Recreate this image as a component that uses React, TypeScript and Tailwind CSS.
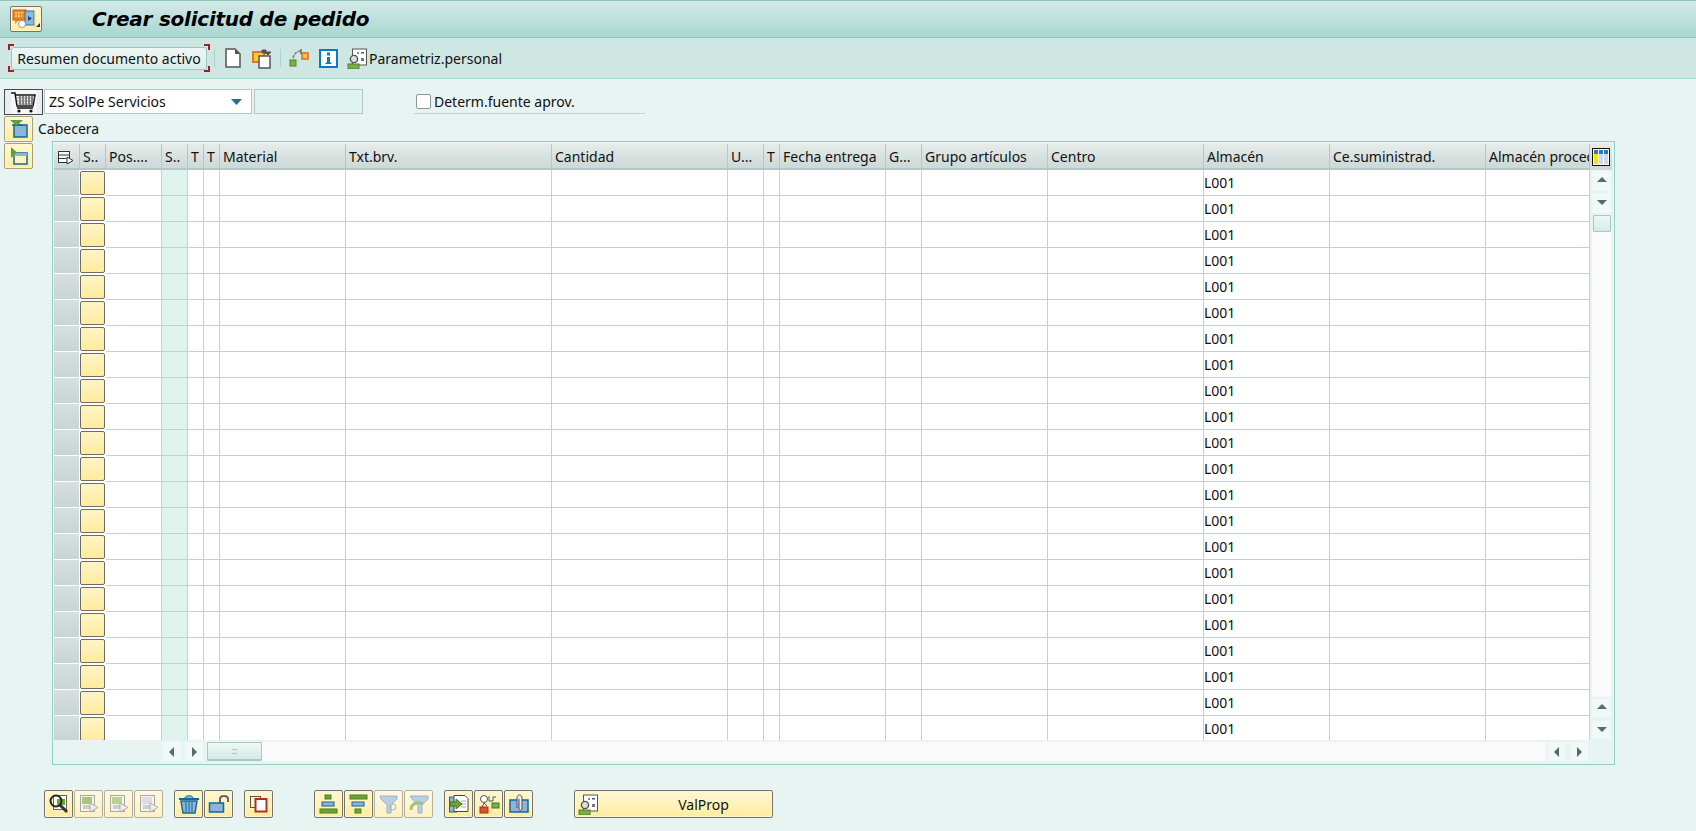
import React from 'react';

const columns = ['', 'S..', 'Pos....', 'S..', 'T', 'T', 'Material', 'Txt.brv.', 'Cantidad', 'U...', 'T', 'Fecha entrega', 'G...', 'Grupo artículos', 'Centro', 'Almacén', 'Ce.suministrad.', 'Almacén proced'];
const rows = Array.from({ length: 22 }, (_, i) => i);
const gridCols = 'grid grid-cols-[26px_26px_56px_26px_16px_16px_126px_206px_176px_36px_16px_106px_36px_126px_156px_126px_156px_104px]';

const ArrowBtn: React.FC<{ dir: 'up' | 'down' | 'left' | 'right'; className?: string }> = ({ dir, className }) => {
  const pts = { up: '4,10 9,5 14,10', down: '4,6 14,6 9,11', left: '11,4 11,14 6,9', right: '7,4 7,14 12,9' }[dir];
  return (
    <div className={`flex items-center justify-center bg-[#f1f9f8] ${className ?? ''}`}>
      <svg width="18" height="18" viewBox="0 0 18 18"><polygon points={pts} fill="#4f6f6b" /></svg>
    </div>
  );
};

const YellowBtn: React.FC<{ children?: React.ReactNode; disabled?: boolean; className?: string }> = ({ children, disabled, className }) => (
  <div className={`flex items-center justify-center rounded-[2px] border ${disabled ? 'border-[#b5b09c] bg-gradient-to-b from-[#fff9e4] to-[#fff1c2]' : 'border-[#77736a] bg-gradient-to-b from-[#fff7d4] to-[#ffec9e] shadow-[inset_0_0_0_1px_#fff6cf]'} ${className ?? 'h-[28px] w-[29px]'}`}>
    {children}
  </div>
);

const Ico: React.FC<{ children: React.ReactNode; w?: number; h?: number; className?: string }> = ({ children, w = 20, h = 20, className }) => (
  <svg width={w} height={h} viewBox={`0 0 ${w} ${h}`} className={className}>{children}</svg>
);

const PersonalIcon = () => (
  <Ico w={20} h={21}>
    <rect x="5.500" y="1" width="14" height="16" fill="#fff" stroke="#555" />
    <rect x="14" y="4" width="3" height="1.500" fill="#555" /><rect x="14" y="10" width="3" height="3" fill="#777" /><rect x="10" y="4" width="2" height="2" fill="#888" />
    <circle cx="7" cy="11" r="3.600" fill="#ddd" stroke="#555" strokeWidth="1.400" />
    <rect x="1" y="16" width="11" height="5" fill="#7cae45" stroke="#4e7f2a" />
  </Ico>
);

const ListArrow: React.FC<{ fill?: string }> = ({ fill = '#a9c779' }) => (
  <Ico w={20} h={20}>
    <rect x="1.500" y="1.500" width="14" height="16" fill="#f3f3f3" stroke="#a8a8a0" />
    <rect x="3" y="3" width="10" height="7" fill={fill} />
    <path d="M4 12h8M4 14h8" stroke="#a8a8a0" />
    <polygon points="11,9 11,18 19,13.500" fill="#eee" stroke="#b0b0a8" />
  </Ico>
);

export default function App() {
  return (
    <div className="flex h-[831px] w-full flex-col overflow-hidden bg-[#e8f4f1] font-['Noto_Sans',sans-serif] text-[14px] text-[#111]">
      {/* title bar */}
      <div className="flex h-[38px] shrink-0 items-center border-t border-b border-t-[#8fc7c0] border-b-[#8fc2bb] bg-gradient-to-b from-[#d4ebe7] to-[#a8d6d0] pl-[10px]">
        <YellowBtn className="h-[26px] w-[32px]">
          <Ico w={28} h={22}>
            <rect x="1" y="2" width="13" height="10" fill="#f08a1e" stroke="#c9560f" />
            <path d="M3 12v4l4-4z" fill="#f08a1e" />
            <path d="M3 5h9M3 8h7" stroke="#fff" strokeDasharray="2 1" />
            <rect x="13" y="3" width="9" height="14" fill="#8fb9dc" stroke="#2f74a8" />
            <polygon points="16,8 16,13 20,10.500" fill="#17507d" />
            <circle cx="10" cy="16" r="3.500" fill="#fff" stroke="#999" />
            <path d="M23 2v18" stroke="#e8d9a8" />
            <polygon points="24,19 28,19 28,15" fill="#333" />
          </Ico>
        </YellowBtn>
        <h1 className="ml-[50px] font-['DejaVu_Sans',sans-serif] text-[20px] font-bold tracking-[-0.25px] text-black italic">Crear solicitud de pedido</h1>
      </div>

      {/* toolbar */}
      <div className="flex h-[41px] shrink-0 items-center border-b border-[#a9d3cd] bg-[#cfe7e3] pl-[8px]">
        <div className="relative flex h-[28px] w-[202px] items-center justify-center">
          <span className="absolute top-0 left-0 h-[6px] w-[6px] border-t-2 border-l-2 border-[#a02020]" />
          <span className="absolute top-0 right-0 h-[6px] w-[6px] border-t-2 border-r-2 border-[#a02020]" />
          <span className="absolute bottom-0 left-0 h-[6px] w-[6px] border-b-2 border-l-2 border-[#a02020]" />
          <span className="absolute right-0 bottom-0 h-[6px] w-[6px] border-r-2 border-b-2 border-[#a02020]" />
          <div className="flex h-[23px] w-[196px] items-center justify-center rounded-[3px] border border-[#9cc7c1] bg-gradient-to-b from-[#eef8f6] to-[#d8eeea] whitespace-nowrap">Resumen documento activo</div>
        </div>
        <div className="ml-[4px] h-[18px] w-px bg-[#a9d3cd]" />
        <Ico w={16} h={20} className="ml-[10px]">
          <path d="M1 1h9l5 5v13H1z" fill="#fff" stroke="#555" strokeWidth="1.500" />
          <path d="M10 1v5h5z" fill="#555" />
        </Ico>
        <Ico w={20} h={21} className="ml-[11px]">
          <rect x="1" y="4" width="11" height="10" fill="#fdc93a" stroke="#e07a1a" strokeWidth="2" />
          <rect x="7" y="8" width="11" height="12" fill="#fff" stroke="#555" strokeWidth="1.500" />
          <path d="M10 5V2h4v4M13 4h6l-3 3z" fill="#555" stroke="#555" />
        </Ico>
        <div className="ml-[8px] h-[18px] w-px bg-[#a9d3cd]" />
        <Ico w={20} h={20} className="ml-[8px]">
          <rect x="1" y="12" width="6" height="6" fill="#7cb13f" stroke="#4c7f27" />
          <rect x="13" y="5" width="6" height="6" fill="#fbc333" stroke="#dd6b28" strokeWidth="1.500" />
          <path d="M4 10c1-4 3-6 7-7" fill="none" stroke="#777" strokeWidth="1.500" strokeDasharray="3 1" />
          <path d="M12 1v5" stroke="#666" strokeWidth="1.500" />
        </Ico>
        <Ico w={19} h={19} className="ml-[10px]">
          <rect x="1" y="1" width="17" height="17" fill="#fff" stroke="#0d7abd" strokeWidth="2" />
          <rect x="8" y="3.500" width="3" height="3" fill="#0d7abd" />
          <rect x="8" y="8" width="3" height="6" fill="#0d7abd" />
          <rect x="6.500" y="13.500" width="6" height="1.500" fill="#0d7abd" />
        </Ico>
        <div className="ml-[9px]"><PersonalIcon /></div>
        <span className="ml-[2px] whitespace-nowrap">Parametriz.personal</span>
      </div>

      {/* selection row */}
      <div className="mt-[10px] flex h-[25px] shrink-0 items-center pl-[4px]">
        <div className="flex h-[26px] w-[39px] items-center justify-center border border-[#4a4a4a] bg-[#e8f0ef]">
          <div className="flex h-[24px] w-[26px] items-center justify-center bg-[#f6f6f6]">
            <Ico w={26} h={22}>
              <path d="M0 2h4l2 13h16l2-11H5" fill="#fff" stroke="#111" strokeWidth="1.500" />
              <path d="M9 4v11M12 4v11M15 4v11M18 4v11M21 4v11" stroke="#555" strokeWidth="1.500" />
              <path d="M6 7h18M6 10h17M7 13h15" stroke="#888" />
              <path d="M6 17h16" stroke="#111" strokeWidth="1.500" />
              <circle cx="8" cy="20" r="1.600" fill="#111" /><circle cx="20" cy="20" r="1.600" fill="#111" />
            </Ico>
          </div>
        </div>
        <div className="ml-px flex h-[25px] w-[208px] items-center justify-between border border-[#b5c6c4] bg-white pr-[9px] pl-[4px]">
          <span>ZS SolPe Servicios</span>
          <svg width="11" height="6" viewBox="0 0 11 6"><polygon points="0,0 11,0 5.500,6" fill="#2f6d80" /></svg>
        </div>
        <div className="ml-[2px] h-[25px] w-[109px] border border-[#b5c6c4] bg-[#dff3ef]" />
        <div className="ml-[51px] flex h-[25px] w-[231px] items-center border-b border-[#c0d4d1] pl-[2px]">
          <div className="h-[15px] w-[15px] rounded-[2px] border border-[#8b9a98] bg-white" />
          <span className="ml-[3px]">Determ.fuente aprov.</span>
        </div>
      </div>

      {/* side buttons + table */}
      <div className="mt-[2px] flex flex-1 items-start pl-[4px]">
        <div className="flex w-[29px] shrink-0 flex-col gap-px">
          <YellowBtn className="h-[26px] w-[29px] !border-[#a89f7c]">
            <Ico w={20} h={18}>
              <rect x="5" y="5" width="13" height="12" fill="#8fb4da" stroke="#0f6a96" strokeWidth="1.500" />
              <path d="M3 5h11" stroke="#0f6a96" strokeWidth="1.500" />
              <polygon points="1,0 14,0 7.500,6" fill="#5e9e3c" />
            </Ico>
          </YellowBtn>
          <YellowBtn className="h-[26px] w-[29px] !border-[#a89f7c]">
            <Ico w={20} h={18}>
              <rect x="5" y="6" width="13" height="11" fill="#fff3c4" stroke="#0f6a96" strokeWidth="1.500" />
              <rect x="5" y="6" width="13" height="3" fill="#8fb4da" />
              <polygon points="2,0 2,11 8,5.500" fill="#5e9e3c" />
            </Ico>
          </YellowBtn>
        </div>
        <div className="ml-[5px] flex flex-col">
          <div className="flex h-[25px] items-center">Cabecera</div>

          <div className="ml-[14px] flex h-[624px] w-[1563px] flex-col border border-[#8fd0c8] pt-[2px] pl-px">
            {/* header */}
            <div className="flex h-[26px] shrink-0">
              <div className={gridCols}>
                {columns.map((c, i) => (
                  <div key={i} className="flex h-[26px] items-center overflow-hidden border-r border-b-2 border-r-[#b6c6c4] border-b-[#b6c6c4] bg-gradient-to-b from-[#e6ecea] to-[#cbd9d7] pt-px pl-[3px] whitespace-nowrap">
                    {i === 0 ? (
                      <Ico w={18} h={16}>
                        <rect x="1.500" y="2.500" width="11" height="11" fill="#fff" stroke="#333" />
                        <path d="M1.500 6h11M1.500 9.500h8" stroke="#333" />
                        <polygon points="10,8 10,15 16,11.500" fill="#fff" stroke="#333" />
                      </Ico>
                    ) : c}
                  </div>
                ))}
              </div>
              <div className="flex h-[26px] w-[22px] items-center justify-center bg-gradient-to-b from-[#e6ecea] to-[#cbd9d7] pb-px">
                <Ico w={18} h={18}>
                  <rect x="0.500" y="0.500" width="17" height="17" fill="#fff" stroke="#111" />
                  <rect x="2" y="2" width="4" height="4" fill="#2d78c4" /><rect x="7" y="2" width="4" height="4" fill="#2d78c4" /><rect x="12" y="2" width="4" height="4" fill="#2d78c4" />
                  <rect x="2" y="6" width="4" height="10" fill="#ffe000" /><rect x="7" y="6" width="4" height="10" fill="#cfd8e8" /><rect x="12" y="6" width="4" height="10" fill="#cfd8e8" />
                </Ico>
              </div>
            </div>

            {/* body */}
            <div className="flex h-[570px] shrink-0">
              <div className="h-[570px] overflow-hidden bg-white">
                {rows.map((r) => (
                  <div key={r} className={gridCols}>
                    {columns.map((_, i) => {
                      if (i === 0) return <div key={i} className="h-[26px] border-r border-b border-white bg-gradient-to-b from-[#d6e0de] to-[#c8d5d3]" />;
                      if (i === 1) return (
                        <div key={i} className="h-[26px] pt-px pr-px pb-px">
                          <div className="h-[24px] rounded-[2px] border border-[#6f6c62] bg-gradient-to-b from-[#fff4c6] to-[#ffec9e]" />
                        </div>
                      );
                      return (
                        <div key={i} className={`flex h-[26px] items-center border-r border-b border-[#c2d2d1] ${i === 3 ? 'bg-[#dff3ef]' : 'bg-white'}`}>
                          {i === 15 ? 'L001' : ''}
                        </div>
                      );
                    })}
                  </div>
                ))}
              </div>
              <div className="flex w-[22px] flex-col items-center pt-px pb-px pl-px">
                <ArrowBtn dir="up" className="h-[20px] w-[19px]" />
                <ArrowBtn dir="down" className="mt-[2px] h-[20px] w-[19px]" />
                <div className="mt-[2px] h-[17px] w-[18px] rounded-[1px] border border-[#a8c8c3] bg-gradient-to-b from-[#eef8f6] to-[#d4ebe7]" />
                <div className="w-[19px] flex-1 bg-[#fafafa]" />
                <ArrowBtn dir="up" className="mt-[2px] h-[18px] w-[19px]" />
                <ArrowBtn dir="down" className="mt-[4px] h-[18px] w-[19px]" />
              </div>
            </div>

            {/* horizontal scrollbar */}
            <div className="mt-[2px] flex h-[19px] shrink-0 pl-[109px]">
              <ArrowBtn dir="left" className="w-[18px]" />
              <ArrowBtn dir="right" className="ml-[4px] w-[18px]" />
              <div className="ml-[4px] flex w-[55px] items-center justify-center rounded-[1px] border border-b-2 border-[#a8c8c3] bg-gradient-to-b from-[#eef8f6] to-[#d4ebe7] text-[8px] leading-none text-[#889]">:::</div>
              <div className="w-[1284px] bg-[#fafafa]" />
              <ArrowBtn dir="left" className="ml-[2px] w-[18px]" />
              <ArrowBtn dir="right" className="ml-[4px] w-[18px]" />
            </div>
          </div>
        </div>
      </div>

      {/* bottom buttons */}
      <div className="mb-[13px] flex h-[28px] shrink-0 pl-[44px]">
        <div className="flex gap-px">
          <YellowBtn>
            <Ico w={22} h={22}>
              <rect x="5.500" y="2.500" width="13" height="14" fill="#fff" stroke="#666" />
              <rect x="9" y="6" width="8" height="6" fill="#6bae2e" />
              <circle cx="8" cy="8" r="5.500" fill="none" stroke="#222" strokeWidth="2" />
              <path d="M12 12l7 7" stroke="#333" strokeWidth="3" />
            </Ico>
          </YellowBtn>
          <YellowBtn disabled><ListArrow /></YellowBtn>
          <YellowBtn disabled><ListArrow fill="#b9d18f" /></YellowBtn>
          <YellowBtn disabled><ListArrow fill="#dddddd" /></YellowBtn>
        </div>
        <div className="ml-[11px] flex gap-px">
          <YellowBtn>
            <Ico w={22} h={20}>
              <path d="M1 5h20" stroke="#0f6a96" strokeWidth="2" />
              <path d="M7 4c0-3 8-3 8 0" fill="#8fb4da" stroke="#0f6a96" />
              <path d="M3 7h16l-2 12H5z" fill="#8fb4da" stroke="#0f6a96" strokeWidth="1.500" />
              <path d="M8 8v10M11 8v10M14 8v10" stroke="#0f6a96" />
            </Ico>
          </YellowBtn>
          <YellowBtn>
            <Ico w={22} h={20}>
              <path d="M12 9V5c0-4 8-4 8 0v3" fill="none" stroke="#666" strokeWidth="2" />
              <rect x="1.500" y="9" width="14" height="9" fill="#8fb4da" stroke="#0f6a96" strokeWidth="1.500" />
            </Ico>
          </YellowBtn>
        </div>
        <div className="ml-[11px]">
          <YellowBtn>
            <Ico w={20} h={18}>
              <rect x="1.500" y="1.500" width="10" height="11" fill="#fff3c4" stroke="#555" />
              <rect x="6.500" y="4" width="11" height="12.500" fill="#fff" stroke="#b03020" strokeWidth="2" />
            </Ico>
          </YellowBtn>
        </div>
        <div className="ml-[41px] flex gap-px">
          <YellowBtn>
            <Ico w={20} h={20}>
              <rect x="6" y="1" width="6" height="4" fill="#6da532" stroke="#4c7f27" />
              <rect x="3" y="8" width="12" height="4" fill="#8fb4da" stroke="#0f6a96" />
              <rect x="1" y="15" width="17" height="4" fill="#6da532" stroke="#4c7f27" />
            </Ico>
          </YellowBtn>
          <YellowBtn>
            <Ico w={20} h={20}>
              <rect x="1" y="1" width="17" height="4" fill="#6da532" stroke="#4c7f27" />
              <rect x="3" y="8" width="12" height="4" fill="#8fb4da" stroke="#0f6a96" />
              <rect x="6" y="15" width="6" height="4" fill="#6da532" stroke="#4c7f27" />
            </Ico>
          </YellowBtn>
          <YellowBtn disabled>
            <Ico w={20} h={20}>
              <path d="M1 2h17v3l-6 6v8H8v-8L2 5z" fill="#b7cfe0" stroke="#9ab5ca" />
              <circle cx="14" cy="13" r="3" fill="none" stroke="#9ab5ca" />
            </Ico>
          </YellowBtn>
          <YellowBtn disabled>
            <Ico w={20} h={20}>
              <path d="M1 2h18v3l-6 6v8H9v-8L3 5z" fill="#b7cfe0" stroke="#9ab5ca" />
              <path d="M2 16c0-6 6-9 12-6" fill="none" stroke="#a5c27c" strokeWidth="3" />
            </Ico>
          </YellowBtn>
        </div>
        <div className="ml-[11px] flex gap-px">
          <YellowBtn>
            <Ico w={22} h={20}>
              <rect x="1.500" y="3" width="7" height="15" fill="#8fb4da" stroke="#0f6a96" />
              <path d="M6 1.500h11l3 3v13H6z" fill="#fff" stroke="#444" />
              <path d="M13 7h5M13 10h5M13 13h5" stroke="#aaa" />
              <path d="M2 8h6V5l6 5-6 5v-3H2z" fill="#6da532" stroke="#3f7a1f" />
            </Ico>
          </YellowBtn>
          <YellowBtn>
            <Ico w={22} h={20}>
              <circle cx="6" cy="5" r="3.500" fill="#fff" stroke="#555" />
              <path d="M6 9l-2 4M6 9l3 3" stroke="#555" />
              <rect x="2" y="13" width="8" height="6" fill="#d9532b" stroke="#a0341a" />
              <path d="M11 2v5h4V3h3" fill="none" stroke="#555" />
              <rect x="14" y="9" width="7" height="5" fill="#7cae45" stroke="#3f7a1f" />
            </Ico>
          </YellowBtn>
          <YellowBtn>
            <Ico w={20} h={20}>
              <rect x="1" y="6" width="18" height="12" fill="#8fb4da" stroke="#0f6a96" strokeWidth="1.500" />
              <path d="M8 14V4c0-4 5-4 5 0v10c0 3-3 3-3 0V5" fill="#e9e9e9" stroke="#555" />
            </Ico>
          </YellowBtn>
        </div>
        <div className="ml-[41px]">
          <YellowBtn className="relative h-[28px] w-[199px]">
            <div className="absolute top-[3px] left-[3px]"><PersonalIcon /></div>
            <span className="ml-[60px]">ValProp</span>
          </YellowBtn>
        </div>
      </div>
    </div>
  );
}
